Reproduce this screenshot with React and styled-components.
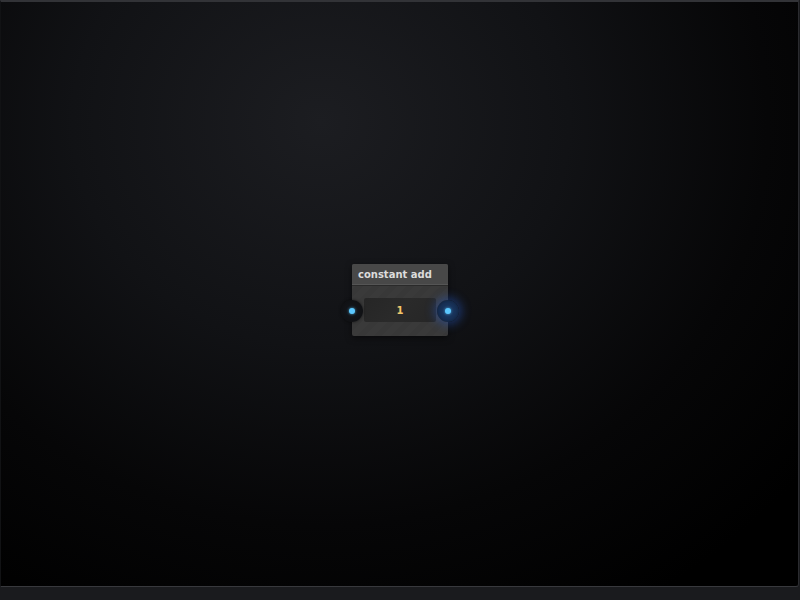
import React from "react";
import styled, { createGlobalStyle } from "styled-components";

const Global = createGlobalStyle`
  html, body { margin: 0; padding: 0; background: #1a1b1e; }
  body { width: 800px; height: 600px; overflow: hidden; font-family: "DejaVu Sans", sans-serif; }
`;

const Page = styled.div`
  width: 800px;
  height: 600px;
  display: flex;
  flex-direction: column;
  background: #1a1b1e;
`;

const Canvas = styled.div`
  position: relative;
  box-sizing: border-box;
  width: 799px;
  height: 587px;
  border: 1px solid #2a2b2f;
  border-left-color: #111214;
  border-top: 2px solid #323337;
  border-bottom-color: #38393d;
  border-bottom-right-radius: 3px;
  background: radial-gradient(ellipse 620px 560px at 320px 120px, #1c1d21 0%, #111215 40%, #060607 72%, #000 100%);
  display: flex;
  align-items: center;
  justify-content: center;
  padding-left: 1px;
  padding-top: 11px;
`;

const Footer = styled.div`
  flex: 1;
  background: #1a1b1e;
`;

const Node = styled.div`
  position: relative;
  width: 96px;
  height: 72px;
  border-radius: 2px;
  background: repeating-linear-gradient(135deg, #3a3a3a 0px, #3a3a3a 6px, #383838 6px, #383838 12px);
  display: flex;
  flex-direction: column;
  box-shadow: 0 2px 6px rgba(0,0,0,0.5);
`;

const Header = styled.div`
  height: 21px;
  background: #484848;
  border-bottom: 1px solid #2a2a2a;
  border-radius: 2px 2px 0 0;
  display: flex;
  align-items: center;
  padding: 0 6px;
  font-family: "DejaVu Sans", sans-serif;
  font-weight: bold;
  font-size: 10px;
  color: #dcdcdc;
  box-shadow: inset 0 -1px 0 #555;
`;

const Body = styled.div`
  flex: 1;
  display: flex;
  align-items: center;
  justify-content: center;
  padding-bottom: 1px;
`;

const Value = styled.div`
  width: 72px;
  height: 24px;
  border-radius: 2px;
  background: linear-gradient(135deg, #262626 0%, #2a2a2a 50%, #262626 100%);
  display: flex;
  align-items: center;
  justify-content: center;
  font-family: "DejaVu Sans", sans-serif;
  font-weight: bold;
  font-size: 10px;
  color: #f2c66a;
`;

const Port = styled.div`
  position: absolute;
  top: 36px;
  ${p => (p.$side === "left" ? "left: -11px;" : "right: -11px;")}
  width: 22px;
  height: 22px;
  border-radius: 50%;
  background: ${p => (p.$glow ? "radial-gradient(circle, #1e3a66 0%, #173056 50%, #0e1a30 100%)" : "radial-gradient(circle, #15171c 0%, #101114 70%, #0c0d10 100%)")};
  box-shadow: ${p => (p.$glow ? "0 0 10px 3px rgba(40,90,200,0.45)" : "0 0 3px rgba(0,0,0,0.6)")};
  display: flex;
  align-items: center;
  justify-content: center;
  &::after {
    content: "";
    width: 6px;
    height: 6px;
    border-radius: 50%;
    background: #5cc8ff;
    box-shadow: 0 0 3px rgba(90,200,255,0.8);
  }
`;

export default function App() {
  return (
    <Page>
      <Global />
      <Canvas>
        <Node>
          <Header>constant add</Header>
          <Body>
            <Value>1</Value>
          </Body>
          <Port $side="left" />
          <Port $side="right" $glow />
        </Node>
      </Canvas>
      <Footer />
    </Page>
  );
}
